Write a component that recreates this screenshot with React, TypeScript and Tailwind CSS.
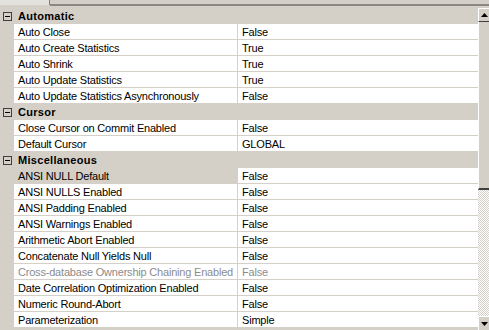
import React from "react";

type Row = { name: string; value: string; dim?: boolean; selected?: boolean };
type Group = { title: string; rows: Row[] };

const groups: Group[] = [
  {
    title: "Automatic",
    rows: [
      { name: "Auto Close", value: "False" },
      { name: "Auto Create Statistics", value: "True" },
      { name: "Auto Shrink", value: "True" },
      { name: "Auto Update Statistics", value: "True" },
      { name: "Auto Update Statistics Asynchronously", value: "False" },
    ],
  },
  {
    title: "Cursor",
    rows: [
      { name: "Close Cursor on Commit Enabled", value: "False" },
      { name: "Default Cursor", value: "GLOBAL" },
    ],
  },
  {
    title: "Miscellaneous",
    rows: [
      { name: "ANSI NULL Default", value: "False", selected: true },
      { name: "ANSI NULLS Enabled", value: "False" },
      { name: "ANSI Padding Enabled", value: "False" },
      { name: "ANSI Warnings Enabled", value: "False" },
      { name: "Arithmetic Abort Enabled", value: "False" },
      { name: "Concatenate Null Yields Null", value: "False" },
      { name: "Cross-database Ownership Chaining Enabled", value: "False", dim: true },
      { name: "Date Correlation Optimization Enabled", value: "False" },
      { name: "Numeric Round-Abort", value: "False" },
      { name: "Parameterization", value: "Simple" },
    ],
  },
];

const CollapseBox = () => (
  <div className="w-[9px] h-[9px] border border-[#404040] bg-[#d4d0c8] flex items-center justify-center">
    <div className="w-[5px] h-px bg-black" />
  </div>
);

const Arrow = ({ up }: { up?: boolean }) => (
  <svg width="7" height="4" viewBox="0 0 7 4">
    {up ? <path d="M3.5 0 L7 4 L0 4 Z" fill="#000" /> : <path d="M0 0 L7 0 L3.5 4 Z" fill="#000" />}
  </svg>
);

const PropertyRow = ({ row }: { row: Row }) => (
  <div className="flex h-[16px]">
    <div className="w-[14px] shrink-0 bg-[#d4d0c8]" />
    <div
      className={
        "w-[224px] shrink-0 pl-[4px] border-b border-r border-[#d4d0c8] whitespace-nowrap overflow-hidden tracking-[-0.2px] " +
        (row.selected ? "bg-[#d4d0c8] " : "bg-white ") +
        (row.dim ? "text-[#8c8c8c]" : "text-black")
      }
    >
      {row.name}
    </div>
    <div
      className={
        "flex-1 pl-[4px] bg-white border-b border-[#d4d0c8] whitespace-nowrap tracking-[-0.2px] " +
        (row.dim ? "text-[#8c8c8c]" : "text-black")
      }
    >
      {row.value}
    </div>
  </div>
);

export default function App() {
  return (
    <div
      className="w-[489px] h-[330px] overflow-hidden bg-[#d4d0c8] text-[11px] leading-[16px] flex flex-col"
      style={{ fontFamily: '"Liberation Sans", Arial, sans-serif' }}
    >
      <div className="h-[8px] shrink-0 flex">
        <div className="w-[50px] h-[5px] border-r border-[#808080] bg-[#e4e2dc]" />
        <div className="flex-1 h-[6px] border-b-2 border-[#8a8880]" />
      </div>
      <div className="flex flex-1 min-h-0">
        <div className="w-[478px] flex flex-col">
          {groups.map((g) => (
            <div key={g.title}>
              <div className="flex h-[16px] items-center bg-[#d4d0c8]">
                <div className="w-[16px] pl-[3px] shrink-0">
                  <CollapseBox />
                </div>
                <span className="pl-[2px] font-bold text-black tracking-[0.3px]">{g.title}</span>
              </div>
              {g.rows.map((r) => (
                <PropertyRow key={r.name} row={r} />
              ))}
            </div>
          ))}
        </div>
        <div className="w-[11px] flex flex-col">
          <div className="h-[14px] bg-[#d4d0c8] border-t border-l border-white border-b border-b-[#404040] flex items-center justify-center">
            <Arrow up />
          </div>
          <div className="h-[168px] bg-[#d4d0c8] border-l border-white border-b-2 border-b-[#404040]" />
          <div className="flex-1 bg-[repeating-conic-gradient(#ffffff_0%_25%,#d4d0c8_0%_50%)] bg-[length:2px_2px]" />
          <div className="h-[14px] bg-[#d4d0c8] border-t border-l border-white flex items-center justify-center">
            <Arrow />
          </div>
        </div>
      </div>
    </div>
  );
}
